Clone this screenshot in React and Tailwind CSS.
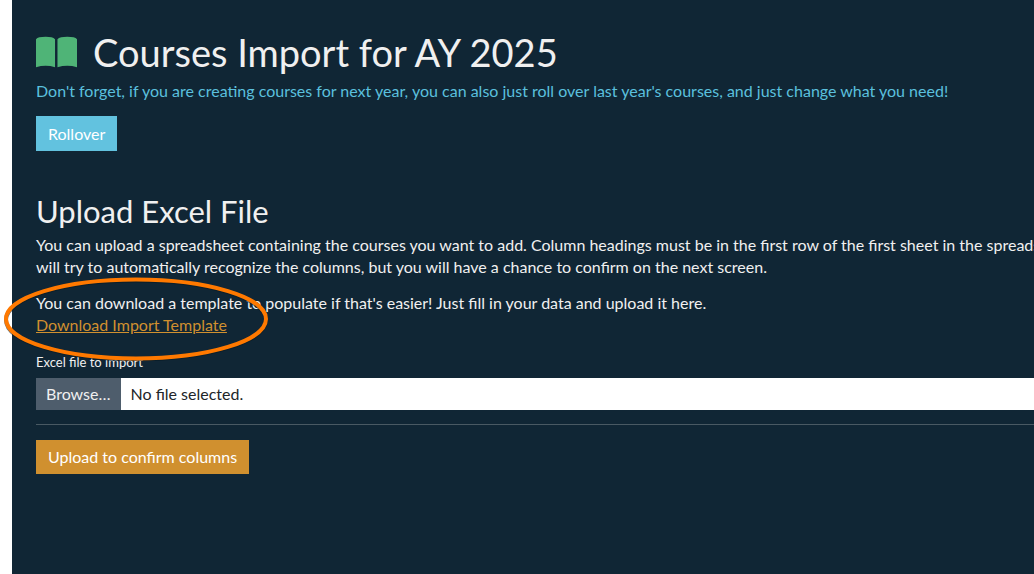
export default function App() {
  return (
    <div className="min-h-screen overflow-hidden bg-white pl-3 font-['Lato',sans-serif]">
      <main className="min-h-screen bg-[#102635] pt-7 pl-6 text-[16px] leading-[22px] text-[#f0f0f0]">
        <h1 className="flex items-center gap-4 text-[38px] leading-[48px] whitespace-nowrap">
          <svg className="h-8 w-[41px] shrink-0" viewBox="0 0 42 32" fill="#4fb477" aria-hidden="true">
            <path d="M0 3Q2 .5 10 .5Q17 .5 19.5 3V31.5Q10 28.5 0 31.5Z" />
            <path d="M22 3Q24.5 .5 32 .5Q40 .5 42 3V31.5Q32 28.5 22 31.5Z" />
          </svg>
          Courses Import for AY 2025
        </h1>
        <p className="mt-1 whitespace-nowrap text-[#5bc0de]">
          Don't forget, if you are creating courses for next year, you can also just roll over last year's courses, and just change what you need!
        </p>
        <button type="button" className="mt-3.5 h-[35px] bg-[#62c2df] px-3 text-white">
          Rollover
        </button>

        <h2 className="mt-10 text-[31px] leading-10">Upload Excel File</h2>
        <p className="mt-[3px] whitespace-nowrap">
          You can upload a spreadsheet containing the courses you want to add. Column headings must be in the first row of the first sheet in the spreadsheet. We
          <br />
          will try to automatically recognize the columns, but you will have a chance to confirm on the next screen.
        </p>
        <div className="relative mt-3.5">
          <p className="whitespace-nowrap">
            You can download a template to populate if that's easier! Just fill in your data and upload it here.
          </p>
          <a href="#template" className="text-[#d0902f] underline">
            Download Import Template
          </a>
          <svg
            className="pointer-events-none absolute -top-[15px] -left-8 h-[84px] w-[266px]"
            viewBox="0 0 266 84"
            fill="none"
            aria-hidden="true"
          >
            <ellipse cx="132" cy="43" rx="130" ry="39.5" stroke="#071923" strokeOpacity=".6" strokeWidth="4" />
            <ellipse cx="132" cy="42" rx="130" ry="39.5" stroke="#ff7900" strokeWidth="4" />
          </svg>
        </div>

        <form>
          <label htmlFor="excel-file" className="mt-4 block text-[13px] leading-5">
            Excel file to import
          </label>
          <input id="excel-file" type="file" className="peer sr-only" />
          <label
            htmlFor="excel-file"
            className="mt-1.5 flex h-8 items-stretch bg-white text-[#212529] peer-focus-visible:ring-2"
          >
            <span className="flex items-center bg-[#4e5d6c] px-2.5 text-[#f0f0f0]">Browse…</span>
            <span className="flex items-center px-2.5">No file selected.</span>
          </label>
          <hr className="mt-3.5 border-[#495963]" />
          <button type="submit" className="mt-[15px] h-[34px] bg-[#d0902f] px-3 text-white">
            Upload to confirm columns
          </button>
        </form>
      </main>
    </div>
  );
}
